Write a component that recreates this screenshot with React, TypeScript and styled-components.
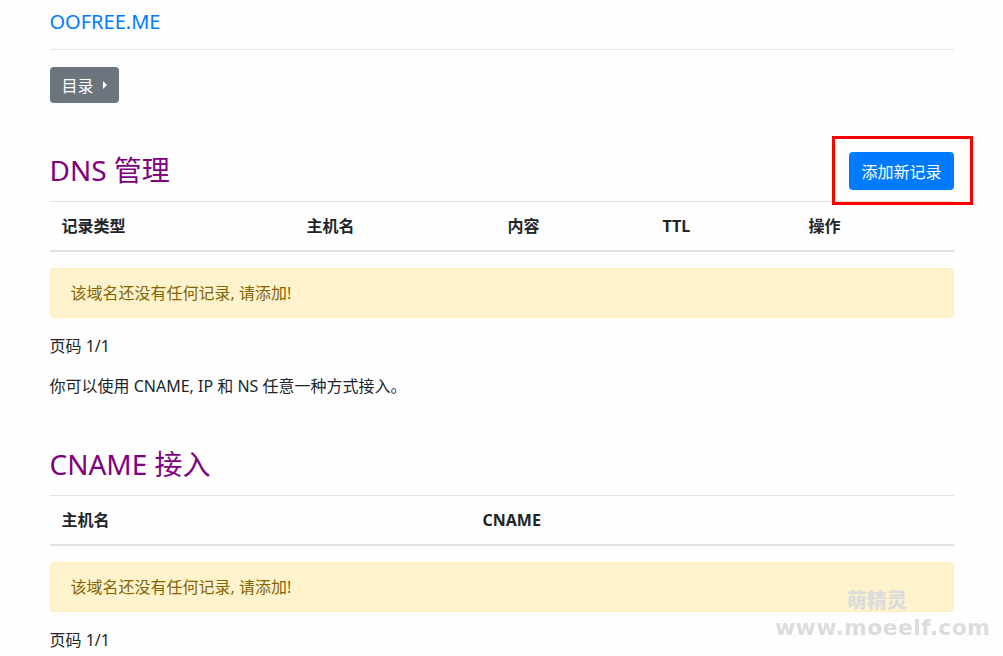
import React from 'react';
import styled, { createGlobalStyle } from 'styled-components';

const GlobalStyle = createGlobalStyle`
  html, body {
    margin: 0;
    padding: 0;
    background: #fdfefd;
  }
  body {
    font-family: "Noto Sans", "Noto Sans CJK SC", sans-serif;
    font-size: 16px;
    line-height: 1.5;
    color: #212529;
  }
`;

const Container = styled.div`
  max-width: 904px;
  margin: 0 auto;
`;

const Navbar = styled.nav`
  padding-top: 7px;
  height: 50px;
  border-bottom: 1px solid #e5e5e5;
  box-sizing: border-box;
`;

const Brand = styled.a`
  display: inline-block;
  font-size: 20px;
  line-height: 30px;
  color: #007bff;
  text-decoration: none;
`;

const Button = styled.button<{ $variant: 'secondary' | 'primary'; $h: number }>`
  display: inline-flex;
  align-items: center;
  gap: 9px;
  height: ${(p) => p.$h}px;
  padding: 0 12px;
  border: none;
  border-radius: 4px;
  font-family: inherit;
  font-size: 16px;
  color: #fff;
  background: ${(p) => (p.$variant === 'primary' ? '#007bff' : '#6c757d')};
  cursor: pointer;
`;

const Caret = styled.span`
  width: 0;
  height: 0;
  border-top: 4px solid transparent;
  border-bottom: 4px solid transparent;
  border-left: 4px solid #fff;
`;

const MenuRow = styled.div`
  margin-top: 17px;
`;

const HeaderRow = styled.div<{ $top: number }>`
  display: flex;
  align-items: center;
  justify-content: space-between;
  min-height: 38px;
  margin-top: ${(p) => p.$top}px;
  margin-bottom: 11px;
`;

const Title = styled.h2`
  margin: 0;
  font-size: 28px;
  font-weight: 400;
  line-height: 1.2;
  color: #800080;
`;

const Marked = styled.div`
  position: relative;
`;

const Highlight = styled.span`
  position: absolute;
  top: -16px;
  right: -19px;
  bottom: -15px;
  left: -17px;
  border: 3px solid #f00;
  pointer-events: none;
`;

const Table = styled.table`
  width: 100%;
  border-collapse: collapse;
  margin-bottom: 16px;
`;

const Th = styled.th<{ $w?: number }>`
  width: ${(p) => (p.$w ? `${p.$w}px` : 'auto')};
  padding: 12px;
  text-align: left;
  font-weight: 700;
  border-top: 1px solid #dee2e6;
  border-bottom: 2px solid #dee2e6;
`;

const Alert = styled.div`
  padding: 12px 20px;
  margin-bottom: 16px;
  color: #856404;
  background: #fff3cd;
  border: 1px solid #ffeeba;
  border-radius: 4px;
`;

const Text = styled.p`
  margin: 0 0 16px;
`;

const Watermark = styled.div`
  position: fixed;
  left: 775px;
  top: 590px;
  width: 212px;
  font-family: "DejaVu Sans", sans-serif;
  font-weight: 700;
  color: #dcdcdc;
  line-height: 1;
  pointer-events: none;
`;

const WmName = styled.div`
  font-family: "Noto Sans CJK SC", sans-serif;
  font-weight: 900;
  font-size: 20px;
  padding-left: 72px;
`;

const WmUrl = styled.div`
  margin-top: 7px;
  font-size: 22px;
  letter-spacing: 0.3px;
`;

const EmptyAlert = () => <Alert>该域名还没有任何记录, 请添加!</Alert>;

export default function App() {
  return (
    <>
      <GlobalStyle />
      <Container>
        <Navbar>
          <Brand href="#">OOFREE.ME</Brand>
        </Navbar>
        <MenuRow>
          <Button $variant="secondary" $h={36}>
            目录 <Caret />
          </Button>
        </MenuRow>

        <HeaderRow $top={49}>
          <Title>DNS 管理</Title>
          <Marked>
            <Button $variant="primary" $h={38}>添加新记录</Button>
            <Highlight />
          </Marked>
        </HeaderRow>
        <Table>
          <thead>
            <tr>
              <Th $w={221}>记录类型</Th>
              <Th $w={177}>主机名</Th>
              <Th $w={131}>内容</Th>
              <Th $w={122}>TTL</Th>
              <Th>操作</Th>
            </tr>
          </thead>
        </Table>
        <EmptyAlert />
        <Text>页码 1/1</Text>
        <Text>你可以使用 CNAME, IP 和 NS 任意一种方式接入。</Text>

        <HeaderRow $top={48}>
          <Title>CNAME 接入</Title>
        </HeaderRow>
        <Table>
          <thead>
            <tr>
              <Th $w={397}>主机名</Th>
              <Th>CNAME</Th>
            </tr>
          </thead>
        </Table>
        <EmptyAlert />
        <Text>页码 1/1</Text>
      </Container>
      <Watermark>
        <WmName>萌精灵</WmName>
        <WmUrl>www.moeelf.com</WmUrl>
      </Watermark>
    </>
  );
}
